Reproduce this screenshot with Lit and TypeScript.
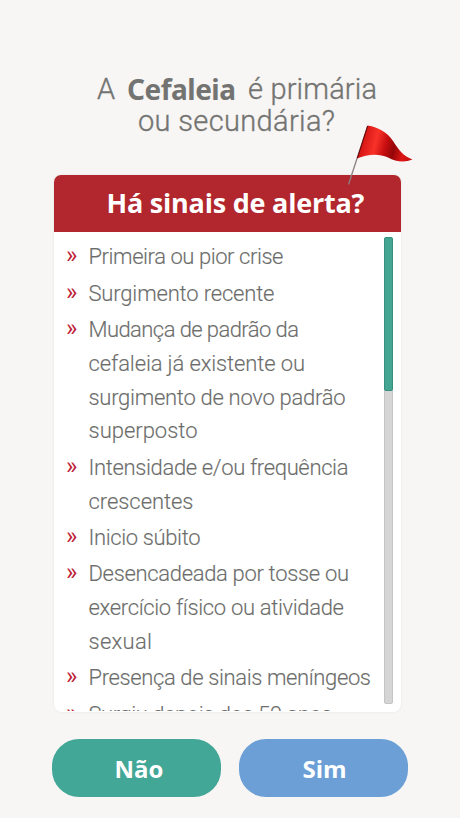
import { LitElement, html, css, svg } from "lit";
import { customElement, property } from "lit/decorators.js";

/** One line of text whose tracking is adjusted so that it fills a given width. */
@customElement("fit-text")
class FitText extends LitElement {
  @property({ type: Number }) width = 0;
  @property() text = "";

  static styles = css`
    :host { display: inline-block; white-space: nowrap; text-align: left; }
    .run { display: inline-block; white-space: pre; }
  `;

  render() {
    return html`<span class="run">${this.text}</span>`;
  }

  firstUpdated() {
    this.style.width = this.width + "px";
    this.fit();
    document.fonts.ready.then(() => this.fit());
  }

  fit() {
    const run = this.renderRoot.querySelector(".run") as HTMLElement;
    run.style.letterSpacing = "0px";
    const natural = run.getBoundingClientRect().width;
    const gaps = Math.max(1, this.text.length - 1);
    run.style.letterSpacing = (this.width - natural) / gaps + "px";
    run.style.marginRight = "-4px";
  }
}

type Line = [string, number];

const SIGNS: Line[][] = [
  [["Primeira ou pior crise", 195]],
  [["Surgimento recente", 186]],
  [
    ["Mudança de padrão da", 210.5],
    ["cefaleia já existente ou", 216.5],
    ["surgimento de novo padrão", 257],
    ["superposto", 109],
  ],
  [["Intensidade e/ou frequência", 260], ["crescentes", 105]],
  [["Inicio súbito", 112]],
  [
    ["Desencadeada por tosse ou", 260.5],
    ["exercício físico ou atividade", 255.5],
    ["sexual", 63.5],
  ],
  [["Presença de sinais meníngeos", 282.5]],
  [["Surgiu depois dos 50 anos", 244]],
];

@customElement("app-root")
class AppRoot extends LitElement {
  static styles = css`
    :host {
      display: flex;
      flex-direction: column;
      box-sizing: border-box;
      width: 460px;
      height: 818px;
      padding-top: 73px;
      overflow: hidden;
      background: #f7f6f4;
      font-family: Roboto, "Noto Sans", sans-serif;
      color: #747573;
    }
    h1 {
      margin: 0;
      font-size: 29px;
      font-weight: 300;
      line-height: 32px;
      height: 102px;
      color: #737472;
      -webkit-text-stroke: 0.35px #737472;
    }
    .row { display: flex; height: 32px; }
    .first { padding-left: 97px; gap: 11px; }
    .second { padding-left: 138px; }
    .strong {
      font-weight: 700;
      font-family: "Noto Sans", sans-serif;
      font-size: 28px;
      -webkit-text-stroke: 0;
    }
    .e { margin-left: 1px; }
    .card {
      position: relative;
      display: flex;
      flex-direction: column;
      box-sizing: border-box;
      width: 347px;
      height: 537px;
      margin-left: 54px;
      border-radius: 8px;
      background: #fff;
      box-shadow: 0 0 3px rgba(0, 0, 0, 0.07);
    }
    .title {
      display: flex;
      flex: none;
      height: 57px;
      box-sizing: border-box;
      padding: 0 0 1px 52.5px;
      align-items: center;
      border-radius: 7px 7px 0 0;
      background: #b2262d;
      color: #fff;
      font: 700 27px/36px "Open Sans", "Noto Sans", sans-serif;
    }
    .flag { position: absolute; left: 290px; top: -52px; }
    .body {
      display: flex;
      justify-content: space-between;
      height: 479px;
      overflow: hidden;
    }
    ul {
      margin: 0;
      padding: 8.2px 0 0 12px;
      list-style: none;
      font-size: 22px;
      font-weight: 300;
      line-height: 33.8px;
      color: #6c6d6b;
      -webkit-text-stroke: 0.12px #6c6d6b;
    }
    li { display: grid; grid-template-columns: 22.5px auto; margin-bottom: 2.6px; }
    .mark {
      color: #bd2137;
      font: 400 24px/31px Roboto, sans-serif;
      -webkit-text-stroke: 0;
    }
    .line { display: block; height: 33.8px; }
    .track {
      flex: none;
      box-sizing: border-box;
      width: 9px;
      height: 467px;
      margin: 5px 8px 0 0;
      border: 1px solid #c5c5c5;
      border-radius: 2px;
      background: #d5d5d5;
    }
    .thumb {
      box-sizing: border-box;
      width: 9px;
      height: 154px;
      margin: -1px;
      border: 1px solid #36907f;
      border-radius: 2px;
      background: #43a592;
    }
    .actions { display: flex; gap: 18px; padding: 27px 0 0 51.5px; }
    button {
      width: 169px;
      height: 58px;
      padding: 0;
      border: 0;
      border-radius: 27px;
      color: #fff;
      font: 700 24px/57px "Open Sans", "Noto Sans", sans-serif;
    }
    .no { background: #43a797; padding-left: 6px; }
    .yes { background: #6b9fd6; padding-left: 3px; }
  `;

  flag() {
    return html`<svg class="flag" width="72" height="64" viewBox="344 123 72 64">
      ${svg`
      <defs>
        <linearGradient id="cloth" gradientUnits="userSpaceOnUse" x1="358" y1="140" x2="412" y2="154">
          <stop offset="0" stop-color="#a50a0c" />
          <stop offset="0.1" stop-color="#d81716" />
          <stop offset="0.32" stop-color="#f8322a" />
          <stop offset="0.5" stop-color="#c80e10" />
          <stop offset="0.66" stop-color="#940508" />
          <stop offset="0.84" stop-color="#dc1515" />
          <stop offset="1" stop-color="#c80f10" />
        </linearGradient>
      </defs>
      <path d="M367.5 126.5L348.5 184.5" stroke="#8c8080" stroke-width="1.3" fill="none" />
      <path d="M367.5 125.5C379 127.500 387 132 393 141C400 151.500 403 155.500 412.500 159.500C405 162.500 396 162 388 157.500C378 153 367 154.500 357 158.500Z" fill="url(#cloth)" />
      <path d="M367.700 126L357.400 158" stroke="#65090b" stroke-width="1" fill="none" />
      `}
    </svg>`;
  }

  render() {
    return html`
      <h1>
        <div class="row first">
          <fit-text text="A" width="19"></fit-text>
          <fit-text class="strong" text="Cefaleia" width="109"></fit-text>
          <fit-text class="e" text="é primária" width="129"></fit-text>
        </div>
        <div class="row second">
          <fit-text text="ou secundária?" width="197"></fit-text>
        </div>
      </h1>
      <section class="card">
        <div class="title"><fit-text text="Há sinais de alerta?" width="258"></fit-text></div>
        <div class="body">
          <ul>
            ${SIGNS.map(
              (lines) => html`<li>
                <span class="mark">»</span>
                <div>
                  ${lines.map(
                    ([text, width]) =>
                      html`<span class="line"><fit-text .text=${text} .width=${width}></fit-text></span>`
                  )}
                </div>
              </li>`
            )}
          </ul>
          <div class="track"><div class="thumb"></div></div>
        </div>
        ${this.flag()}
      </section>
      <div class="actions">
        <button class="no">Não</button>
        <button class="yes">Sim</button>
      </div>
    `;
  }
}
